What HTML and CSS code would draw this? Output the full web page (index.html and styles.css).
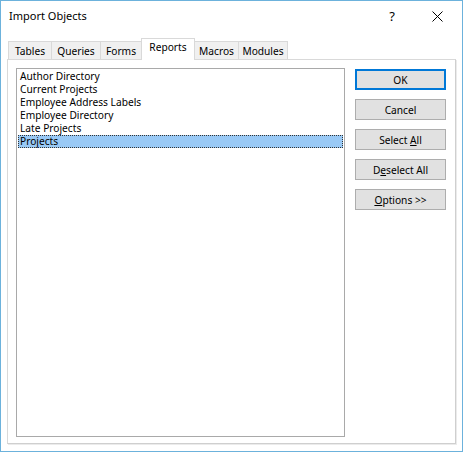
FILE: index.html
```html
<!DOCTYPE html>
<html>
<head>
<meta charset="utf-8">
<link rel="stylesheet" href="styles.css">
</head>
<body>
<div class="window">
  <div class="titlebar">
    <span class="title">Import Objects</span>
    <span class="help">?</span>
    <span class="close"><svg width="11" height="11" viewBox="0 0 11 11"><path d="M0.5 0.5 L10.5 10.5 M10.5 0.5 L0.5 10.5" stroke="#000" stroke-width="1" fill="none"/></svg></span>
  </div>
  <div class="content">
    <div class="tabs">
      <div class="tab w-tables">Tables</div>
      <div class="tab w-queries">Queries</div>
      <div class="tab w-forms">Forms</div>
      <div class="tab active w-reports">Reports</div>
      <div class="tab w-macros">Macros</div>
      <div class="tab w-modules">Modules</div>
    </div>
    <div class="panel">
      <div class="list">
        <div class="item">Author Directory</div>
        <div class="item">Current Projects</div>
        <div class="item">Employee Address Labels</div>
        <div class="item">Employee Directory</div>
        <div class="item">Late Projects</div>
        <div class="item selected">Projects</div>
      </div>
      <div class="buttons">
        <div class="btn default"><span>OK</span></div>
        <div class="btn"><span>Cancel</span></div>
        <div class="btn"><span>Select <u>A</u>ll</span></div>
        <div class="btn"><span>D<u>e</u>select All</span></div>
        <div class="btn"><span><u>O</u>ptions &gt;&gt;</span></div>
      </div>
    </div>
  </div>
</div>
</body>
</html>
```
FILE: styles.css
```css
* { box-sizing: border-box; }
html, body { margin: 0; padding: 0; background: #fff; }
body { font-family: "Noto Sans", "DejaVu Sans", sans-serif; font-size: 10.2px; color: #000; }
.window {
  width: 463px; height: 452px;
  border: 1px solid #6cb2dc;
  background: #fff;
  display: flex; flex-direction: column;
}
.titlebar {
  height: 37px;
  display: flex; align-items: flex-start;
  padding-top: 7px;
}
.title { font-size: 11px; margin-left: 8px; flex: 1; }
.help { font-size: 13px; width: 20px; margin-right: 25px; text-align: center; margin-top: -1px; }
.close { width: 20px; margin-right: 15px; padding-top: 3px; display: flex; justify-content: center; }
.content { padding-left: 6px; }
.tabs { display: flex; align-items: flex-end; padding-left: 1px; height: 21px; position: relative; z-index: 1; }
.tab {
  height: 18px;
  padding: 2px 0 0 0;
  text-align: center;
  background: #f0f0f0;
  border: 1px solid #d9d9d9;
  border-bottom: none;
  margin-right: -1px;
  line-height: 14px;
}
.w-tables { width: 44px; }
.w-queries { width: 50px; }
.w-forms { width: 42px; }
.w-reports { width: 54px; }
.w-macros { width: 45px; }
.w-modules { width: 50px; }
.tab.active {
  height: 22px;
  margin-bottom: -1px;
  background: #fff;
  padding-top: 1px;
}
.panel {
  width: 449px; height: 385px;
  border: 1px solid #d9d9d9;
  border-right-color: #cfcfcf;
  border-bottom-color: #cfcfcf;
  box-shadow: 1px 1px 0 #ebebeb;
  display: flex;
  padding: 8px 0 0 8px;
}
.list {
  width: 329px; height: 369px;
  border: 1px solid #a9a9a9;
  padding: 1px 1px 0 1px;
}
.item { height: 13px; line-height: 13px; padding-left: 2px; white-space: nowrap; }
.item.selected {
  background: #99c9f5;
  outline: 1px dotted #333;
  outline-offset: -1px;
}
.buttons { margin-left: 10px; padding-top: 1px; display: flex; flex-direction: column; gap: 9px; }
.btn {
  width: 91px; height: 21px;
  background: #e1e1e1;
  border: 1px solid #adadad;
  display: flex; align-items: center; justify-content: center;
}
.btn.default { border: 2px solid #0078d7; }
```
